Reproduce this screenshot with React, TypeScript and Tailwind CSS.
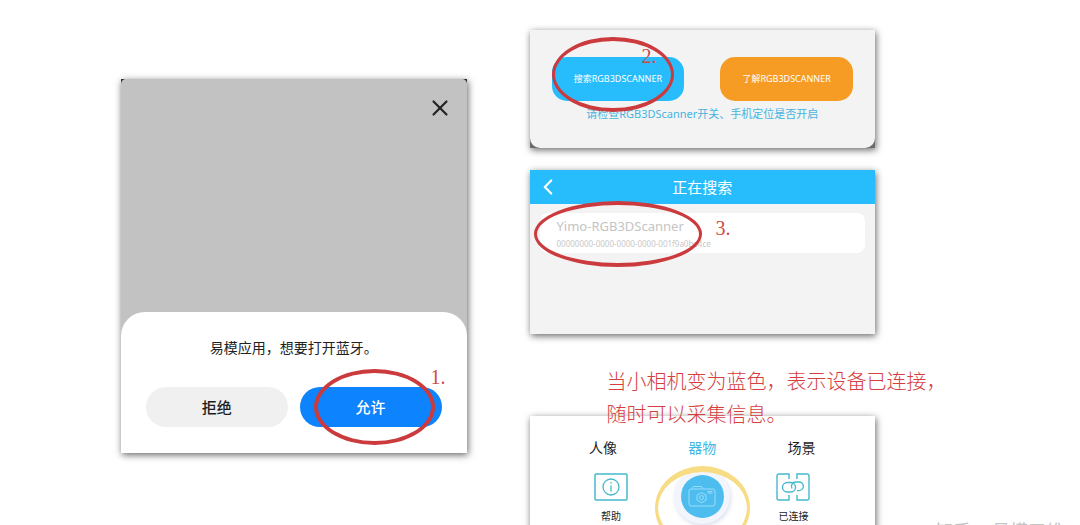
import { ChevronLeft, X } from "lucide-react";
import type { FC, ReactNode } from "react";

const cardShadow = "shadow-[1px_2px_7px_rgba(0,0,0,0.6)]";

const Ring: FC<{ className: string }> = ({ className }) => (
  <span
    className={`pointer-events-none absolute rounded-[50%] border-[#cb3a3c] ${className}`}
  />
);

const Step: FC<{ className: string; children: ReactNode }> = ({
  className,
  children,
}) => (
  <span
    className={`pointer-events-none absolute font-['Liberation_Serif',serif] text-xl leading-5 font-normal text-[#cf4a48] ${className}`}
  >
    {children}
  </span>
);

const BluetoothCard: FC = () => (
  <section className={`bg-[#2d2d2d] ${cardShadow}`}>
    <div className="rounded-t-[5px] bg-[#c2c2c2]">
      <div className="flex h-[233px] items-start justify-end px-[14px] py-4">
        <button type="button" aria-label="关闭">
          <X className="size-[26px] text-[#222]" strokeWidth={2} />
        </button>
      </div>
      <div className="rounded-t-3xl bg-white px-[25px] pt-[26px] pb-[26px]">
        <p className="text-center text-sm text-[#222]">
          易模应用，想要打开蓝牙。
        </p>
        <div className="mt-[29px] grid grid-cols-2 gap-3">
          <button
            type="button"
            className="h-10 rounded-full bg-[#f0f0f0] text-[15px] font-medium text-[#1c1c1c]"
          >
            拒绝
          </button>
          <div className="relative">
            <button
              type="button"
              className="h-10 w-full rounded-full bg-[#0d83fd] text-[15px] font-medium text-white"
            >
              允许
            </button>
            <Ring className="-top-[18px] left-[14px] h-[76px] w-[121px] border-4" />
            <Step className="-top-5 -right-1">1.</Step>
          </div>
        </div>
      </div>
    </div>
  </section>
);

const ScannerCard: FC = () => (
  <section className={`bg-[#6b6b6b] ${cardShadow}`}>
    <div className="rounded-b-[10px] bg-[#f3f3f3] px-[22px] pt-[27px] pb-[26px]">
      <div className="grid grid-cols-2 gap-9">
        <div className="relative">
          <button
            type="button"
            className="h-11 w-full rounded-[15px] bg-[#27bdfd] text-[9px] whitespace-nowrap text-white"
          >
            搜索RGB3DSCANNER
          </button>
          <Ring className="-top-5 left-0 z-10 h-[75px] w-[122px] border-x-3 border-y-4" />
          <Step className="-top-[11px] left-[90px] z-10">2.</Step>
        </div>
        <button
          type="button"
          className="h-11 rounded-[15px] bg-[#f69c24] text-[9px] whitespace-nowrap text-white"
        >
          了解RGB3DSCANNER
        </button>
      </div>
      <p className="mt-[5px] text-center text-[11px] leading-4 whitespace-nowrap text-[#45b3df]">
        请检查RGB3DScanner开关、手机定位是否开启
      </p>
    </div>
  </section>
);

const SearchCard: FC = () => (
  <section className={`mt-[22px] bg-[#f3f3f3] pb-[81px] ${cardShadow}`}>
    <header className="grid h-[34px] grid-cols-[36px_1fr_36px] items-center bg-[#27bdfd] text-white">
      <button type="button" aria-label="返回" className="flex justify-center">
        <ChevronLeft className="size-[26px]" />
      </button>
      <h1 className="text-center text-[15px]">正在搜索</h1>
    </header>
    <div className="relative mx-[10px] mt-[9px] h-10 rounded-lg bg-white pt-1 pl-[17px]">
      <p className="text-[13px] leading-[18px] text-[#c4c4c4]">
        Yimo-RGB3DScanner
      </p>
      <p className="text-[8px] leading-[18px] text-[#c8c8c8]">
        00000000-0000-0000-0000-001f9a0be4ce
      </p>
      <Ring className="-top-3 -left-[6px] h-[66px] w-[168px] border-x-3 border-y-4" />
      <Step className="top-[5px] left-[176px]">3.</Step>
    </div>
  </section>
);

const InfoIcon: FC = () => (
  <svg viewBox="0 0 34 28" className="h-7 w-[34px]" fill="none" stroke="#45b9cb">
    <rect x="1" y="1" width="32" height="26" rx="1" strokeWidth="1.5" />
    <circle cx="17" cy="14" r="8" strokeWidth="1.3" />
    <path d="M17 12.5v6M17 9v1.6" strokeWidth="1.3" />
  </svg>
);

const LinkIcon: FC = () => (
  <svg viewBox="0 0 34 28" className="h-7 w-[34px]" fill="none" stroke="#45b9cb">
    <path
      d="M13 6V1H3a2 2 0 0 0-2 2v22a2 2 0 0 0 2 2h10v-5M21 6V1h10a2 2 0 0 1 2 2v22a2 2 0 0 1-2 2H21v-5"
      strokeWidth="1.4"
    />
    <rect x="6.5" y="9.5" width="13" height="9.5" rx="4.7" strokeWidth="1.4" />
    <path
      d="M16 15.500a4.300 4.300 0 0 1 4-6.500h3a4.300 4.300 0 0 1 0 8.600h-2"
      strokeWidth="1.4"
    />
  </svg>
);

const CameraIcon: FC = () => (
  <svg
    viewBox="0 0 28 22"
    className="h-[22px] w-7"
    fill="none"
    stroke="#a3e0f8"
    strokeWidth="0.9"
  >
    <rect x="1" y="4" width="26" height="17" rx="2" />
    <path d="M4 3.500l1.500-2h8l1.500 2M19.500 6.500h5M19.500 8h5" />
    <path d="M13.500 7.500l4.500 2.600v5l-4.500 2.600-4.500-2.600v-5z" />
    <circle cx="13.500" cy="12.600" r="2" />
  </svg>
);

const CaptureCard: FC = () => (
  <section className={`relative mt-[82px] bg-white pt-5 pb-10 ${cardShadow}`}>
    <p className="pointer-events-none absolute -top-[51px] left-[77px] text-xl leading-[33px] font-light whitespace-nowrap text-[#d5403f]">
      当小相机变为蓝色，表示设备已连接，
      <br />
      随时可以采集信息。
    </p>
    <nav className="grid grid-cols-3 px-6 text-center text-sm leading-6 text-[#1c1c1c]">
      <a href="#portrait">人像</a>
      <a href="#object" className="text-[#3db7e4]">
        器物
      </a>
      <a href="#scene">场景</a>
    </nav>
    <div className="mt-[13px] grid grid-cols-3 px-9 text-[10px] text-[#1c1c1c]">
      <button type="button" className="flex flex-col items-center gap-2">
        <InfoIcon />
        帮助
      </button>
      <div className="relative flex justify-center">
        <button
          type="button"
          aria-label="拍摄"
          className="-mt-[5px] flex size-14 items-center justify-center rounded-full bg-[#f3f5fd] shadow-[1px_2px_4px_#dcdff0]"
        >
          <span className="flex size-[43px] items-center justify-center rounded-full bg-[#4dbdf0]">
            <CameraIcon />
          </span>
        </button>
        <span className="pointer-events-none absolute -top-[7px] h-[84px] w-[95px] rounded-[50%] border-x-3 border-y-6 border-[#f7dc84]" />
      </div>
      <button type="button" className="flex flex-col items-center gap-2">
        <LinkIcon />
        已连接
      </button>
    </div>
  </section>
);

export default function App() {
  return (
    <main className="relative h-screen overflow-hidden bg-white pt-[30px] pr-[205px] pl-[121px] font-['Noto_Sans','Noto_Sans_CJK_SC',sans-serif]">
      <div className="grid grid-cols-2 items-start gap-[63px]">
        <div className="pt-[49px]">
          <BluetoothCard />
        </div>
        <div>
          <ScannerCard />
          <SearchCard />
          <CaptureCard />
        </div>
      </div>
      <p className="absolute right-4 -bottom-4 text-lg leading-5 text-[#c4c4c4]">
        知乎 @易模三维
      </p>
    </main>
  );
}
